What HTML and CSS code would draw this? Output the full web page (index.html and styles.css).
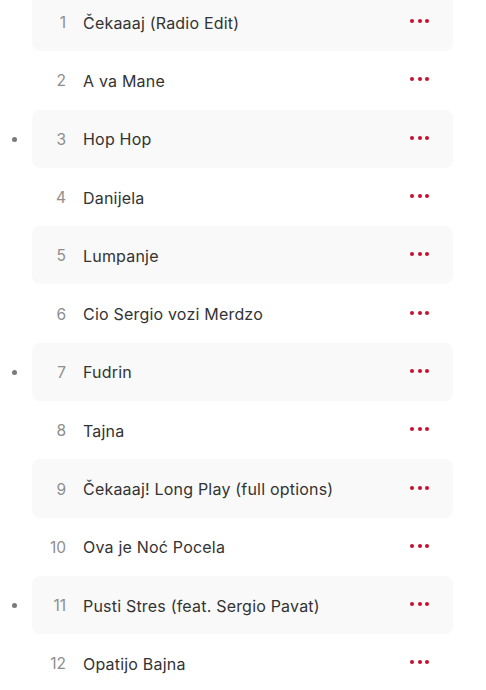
FILE: index.html
```html
<!DOCTYPE html>
<html lang="en">
<head>
    <meta charset="UTF-8">
    <meta name="viewport" content="width=device-width, initial-scale=1.0">
    <title>Tracks</title>
    <link rel="stylesheet" href="styles.css">
</head>
<body>
    <ol class="tracks">
        <li class="track"><span class="mark"></span><span class="num">1</span><span class="title">Čekaaaj (Radio Edit)</span><span class="more"><i></i><i></i><i></i></span></li>
        <li class="track"><span class="mark"></span><span class="num">2</span><span class="title">A va Mane</span><span class="more"><i></i><i></i><i></i></span></li>
        <li class="track"><span class="mark on"></span><span class="num">3</span><span class="title">Hop Hop</span><span class="more"><i></i><i></i><i></i></span></li>
        <li class="track"><span class="mark"></span><span class="num">4</span><span class="title">Danijela</span><span class="more"><i></i><i></i><i></i></span></li>
        <li class="track"><span class="mark"></span><span class="num">5</span><span class="title">Lumpanje</span><span class="more"><i></i><i></i><i></i></span></li>
        <li class="track"><span class="mark"></span><span class="num">6</span><span class="title">Cio Sergio vozi Merdzo</span><span class="more"><i></i><i></i><i></i></span></li>
        <li class="track"><span class="mark on"></span><span class="num">7</span><span class="title">Fudrin</span><span class="more"><i></i><i></i><i></i></span></li>
        <li class="track"><span class="mark"></span><span class="num">8</span><span class="title">Tajna</span><span class="more"><i></i><i></i><i></i></span></li>
        <li class="track"><span class="mark"></span><span class="num">9</span><span class="title">Čekaaaj! Long Play (full options)</span><span class="more"><i></i><i></i><i></i></span></li>
        <li class="track"><span class="mark"></span><span class="num">10</span><span class="title">Ova je Noć Pocela</span><span class="more"><i></i><i></i><i></i></span></li>
        <li class="track"><span class="mark on"></span><span class="num">11</span><span class="title">Pusti Stres (feat. Sergio Pavat)</span><span class="more"><i></i><i></i><i></i></span></li>
        <li class="track"><span class="mark"></span><span class="num">12</span><span class="title">Opatijo Bajna</span><span class="more"><i></i><i></i><i></i></span></li>
    </ol>
</body>
</html>
```

FILE: styles.css
```css
body {
    margin: 0;
    background-color: white;
    font-family: Inter, "Noto Sans", sans-serif;
    overflow: hidden;
}
.tracks {
    list-style: none;
    margin: -7px 0 0 0;
    padding: 0;
}
.track {
    position: relative;
    display: flex;
    align-items: center;
    height: 58.3px;
    margin-left: 32px;
    width: 421px;
    border-radius: 8px;
}
.track:nth-child(odd) {
    background-color: #f9f9f9;
}
.mark {
    position: absolute;
    left: -20px;
    top: 27px;
    width: 5px;
    height: 5px;
    border-radius: 50%;
}
.mark.on {
    background-color: #7a7a7a;
}
.num {
    width: 34px;
    text-align: right;
    font-size: 15.5px;
    color: #8e8e8e;
    flex-shrink: 0;
    padding-top: 1px;
}
.title {
    flex: 1;
    margin-left: 17px;
    font-size: 16px;
    letter-spacing: 0.2px;
    color: #333;
    padding-top: 1px;
}
.more {
    display: flex;
    gap: 3.5px;
    margin-right: 24px;
    margin-top: -2px;
}
.more i {
    display: block;
    width: 4px;
    height: 4px;
    border-radius: 50%;
    background-color: #c8102e;
}
```
